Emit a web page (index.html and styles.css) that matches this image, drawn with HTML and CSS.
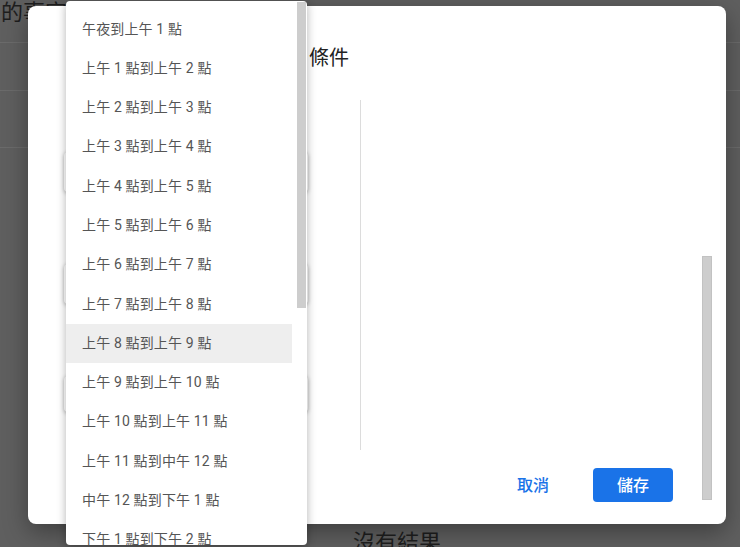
FILE: index.html
```html
<!DOCTYPE html>
<html lang="zh-Hant">
<head>
    <meta charset="UTF-8">
    <meta name="viewport" content="width=device-width, initial-scale=1.0">
    <title>條件</title>
    <link rel="stylesheet" href="styles.css">
</head>
<body>

<div class="page">
    <div class="page-head">的事宜</div>
    <div class="page-row"></div>
    <div class="page-row tall"></div>
    <div class="empty">沒有結果</div>
</div>

<div class="dialog">
    <div class="dialog-title">條件</div>
    <div class="dialog-body">
        <div class="form-col">
            <div class="field"></div>
            <div class="field"></div>
            <div class="field short"></div>
        </div>
        <div class="divider"></div>
        <div class="preview-col"></div>
    </div>
    <div class="dialog-actions">
        <button class="btn-text">取消</button>
        <button class="btn-primary">儲存</button>
    </div>
    <div class="dialog-scroll"></div>
</div>

<div class="menu">
    <div class="menu-list">
        <div class="menu-item">午夜到上午 1 點</div>
        <div class="menu-item">上午 1 點到上午 2 點</div>
        <div class="menu-item">上午 2 點到上午 3 點</div>
        <div class="menu-item">上午 3 點到上午 4 點</div>
        <div class="menu-item">上午 4 點到上午 5 點</div>
        <div class="menu-item">上午 5 點到上午 6 點</div>
        <div class="menu-item">上午 6 點到上午 7 點</div>
        <div class="menu-item">上午 7 點到上午 8 點</div>
        <div class="menu-item active">上午 8 點到上午 9 點</div>
        <div class="menu-item">上午 9 點到上午 10 點</div>
        <div class="menu-item">上午 10 點到上午 11 點</div>
        <div class="menu-item">上午 11 點到中午 12 點</div>
        <div class="menu-item">中午 12 點到下午 1 點</div>
        <div class="menu-item">下午 1 點到下午 2 點</div>
        <div class="menu-item">下午 2 點到下午 3 點</div>
    </div>
    <div class="menu-thumb"></div>
</div>

</body>
</html>
```

FILE: styles.css
```css
body {
    margin: 0;
    padding: 0;
    width: 740px;
    height: 547px;
    overflow: hidden;
    background-color: #5f5f5f;
    font-family: Roboto, "Noto Sans CJK TC", sans-serif;
}
.page {
    height: 547px;
}
.page-head {
    height: 42px;
    font-size: 22px;
    line-height: 26px;
    color: #1e1e1e;
    padding-left: 1px;
    border-bottom: 1px solid #6b6b6b;
}
.page-row {
    height: 47px;
    border-bottom: 1px solid #6b6b6b;
}
.page-row.tall {
    height: 56px;
}
.empty {
    margin-top: 382px;
    padding-left: 353px;
    font-size: 22px;
    line-height: 26px;
    color: #1e1e1e;
}
.dialog {
    position: absolute;
    left: 28px;
    top: 6px;
    width: 698px;
    height: 518px;
    background: white;
    border-radius: 8px;
    box-shadow: 0 8px 24px rgba(0, 0, 0, 0.35);
    display: flex;
    flex-direction: column;
}
.dialog-title {
    margin-top: 38px;
    padding-left: 281px;
    font-size: 20px;
    line-height: 29px;
    color: #222;
}
.dialog-body {
    margin-top: 27px;
    height: 350px;
    display: flex;
}
.form-col {
    width: 332px;
    padding: 52px 0 0 36px;
    box-sizing: border-box;
    display: flex;
    flex-direction: column;
    gap: 72px;
}
.field {
    width: 244px;
    height: 40px;
    border-radius: 4px;
    background: white;
    box-shadow: 0 1px 4px rgba(0, 0, 0, 0.3);
}
.field.short {
    height: 36px;
}
.divider {
    width: 1px;
    background: #dcdcdc;
}
.preview-col {
    flex: 1;
}
.dialog-actions {
    margin-top: 18px;
    height: 34px;
    display: flex;
    justify-content: flex-end;
    padding-right: 53px;
}
.btn-text {
    border: none;
    background: none;
    padding: 0 12px 3px;
    margin-right: 32px;
    font-family: inherit;
    font-size: 16px;
    font-weight: 500;
    color: #1a73e8;
    cursor: pointer;
}
.btn-primary {
    width: 80px;
    height: 34px;
    padding-bottom: 3px;
    border: none;
    border-radius: 4px;
    background: #1a73e8;
    font-family: inherit;
    font-size: 16px;
    font-weight: 500;
    color: white;
    cursor: pointer;
}
.dialog-scroll {
    position: absolute;
    right: 14px;
    top: 250px;
    width: 8px;
    height: 242px;
    background: #cdcdcd;
    border: 1px solid #c2c2c2;
}
.menu {
    position: absolute;
    left: 66px;
    top: 1px;
    width: 241px;
    height: 544px;
    background: white;
    border-radius: 4px;
    box-shadow: 0 2px 10px rgba(0, 0, 0, 0.3);
    overflow: hidden;
}
.menu-list {
    padding-top: 8.5px;
    width: 226px;
}
.menu-item {
    height: 39.3px;
    line-height: 39.3px;
    padding-left: 16px;
    font-size: 14px;
    letter-spacing: 0.15px;
    color: #555;
    white-space: nowrap;
}
.menu-item.active {
    background: #eeeeee;
}
.menu-thumb {
    position: absolute;
    right: 1px;
    top: 1px;
    width: 9px;
    height: 306px;
    background: #cdcdcd;
}
```
